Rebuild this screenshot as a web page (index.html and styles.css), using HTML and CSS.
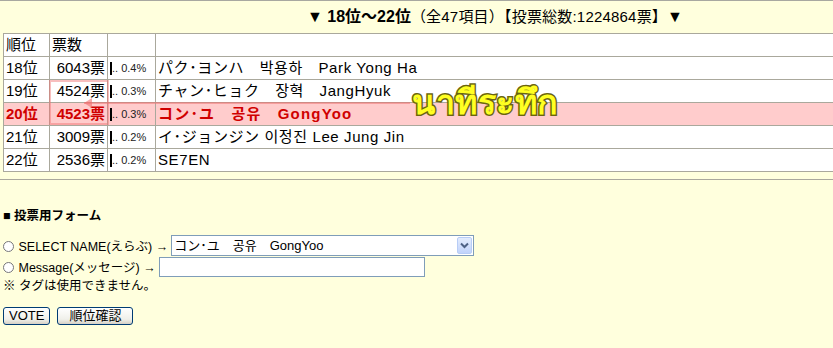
FILE: index.html
```html
<!DOCTYPE html>
<html lang="ja">
<head>
  <meta charset="UTF-8" />
  <meta name="viewport" content="width=device-width,initial-scale=1.0" />
  <title>ランキング 18位〜22位</title>
  <link rel="stylesheet" href="styles.css">
</head>
<body>
  <div class="head">
    <b>▼ 18位〜22位</b><span>（全47項目）【投票総数:1224864票】</span><b>▼</b>
  </div>

  <table class="rank">
    <colgroup>
      <col class="c1"><col class="c2"><col class="c3"><col>
    </colgroup>
    <tr>
      <td>順位</td><td class="lt">票数</td><td></td><td></td>
    </tr>
    <tr>
      <td>18位</td><td class="num">6043票</td>
      <td><i class="bar"></i><small>.. 0.4%</small></td>
      <td class="nm">パク･ヨンハ　박용하　Park Yong Ha</td>
    </tr>
    <tr>
      <td>19位</td><td class="num">4524票</td>
      <td><i class="bar"></i><small>.. 0.3%</small></td>
      <td class="nm">チャン･ヒョク　장혁　JangHyuk</td>
    </tr>
    <tr class="me">
      <td>20位</td><td class="num">4523票</td>
      <td><i class="bar"></i><small>.. 0.3%</small></td>
      <td class="nm">コン･ユ　공유　GongYoo</td>
    </tr>
    <tr>
      <td>21位</td><td class="num">3009票</td>
      <td><i class="bar"></i><small>.. 0.2%</small></td>
      <td class="nm">イ･ジョンジン 이정진 Lee Jung Jin</td>
    </tr>
    <tr>
      <td>22位</td><td class="num">2536票</td>
      <td><i class="bar"></i><small>.. 0.2%</small></td>
      <td class="nm">SE7EN</td>
    </tr>
  </table>

  <div class="rule"></div>

  <form class="vote" action="#" method="post">
    <div class="title">■ 投票用フォーム</div>
    <div class="line">
      <label><input type="radio" name="mode" value="select"> SELECT NAME(えらぶ) →</label>
      <span class="sel">
        <select name="name">
          <option>コン･ユ　공유　GongYoo</option>
          <option>SE7EN</option>
        </select>
        <span class="arrow">
          <svg width="9" height="7" viewBox="0 0 9 7"><path d="M1 1.5 L4.5 5 L8 1.5" fill="none" stroke="#4d6185" stroke-width="2"/></svg>
        </span>
      </span>
    </div>
    <div class="line">
      <label><input type="radio" name="mode" value="msg"> Message(メッセージ) →</label>
      <input type="text" name="msg" class="msg">
    </div>
    <div class="note-tag">※ タグは使用できません。</div>
    <div class="btns">
      <button type="submit">VOTE</button>
      <button type="button" class="wide">順位確認</button>
    </div>
  </form>

  <!-- 貼り付けた注釈 -->
  <div class="mark"></div>
  <div class="pointer"></div>
  <div class="thai">นาทีระทึก</div>
</body>
</html>
```

FILE: styles.css
```css
html {
  overflow: hidden;
}

body {
  margin: 0;
  position: relative;
  height: 347px;
  background-color: #ffffdd;
  border-top: 1px solid #a8a8a0;
  font-family: "Liberation Sans", "Noto Sans CJK JP", sans-serif;
  font-size: 14px;
  color: #000;
}

.head {
  height: 32px;
  line-height: 32px;
  padding-left: 307px;
  white-space: nowrap;
}

.head b {
  font-size: 16px;
}

.head span {
  font-size: 15px;
  letter-spacing: 0.2px;
}

.rank {
  border-collapse: collapse;
  margin-left: 3px;
  width: 840px;
  background-color: #fff;
}

.rank tr {
  height: 23px;
}

.rank td {
  border: 1px solid #aaa89c;
  height: 22px;
  padding: 0 2px;
  line-height: 18px;
  white-space: nowrap;
  font-size: 15px;
  box-sizing: border-box;
}

.rank .nm {
  letter-spacing: 0.6px;
}

.c1 {
  width: 46px;
}

.c2 {
  width: 58px;
}

.c3 {
  width: 48px;
}

.num {
  text-align: right;
}

.bar {
  display: inline-block;
  width: 2px;
  height: 13px;
  background-color: #000;
  vertical-align: middle;
}

.rank small {
  font-size: 11px;
  color: #222;
  vertical-align: middle;
}

.me td {
  background-color: #ffcccc;
  color: #d00000;
  font-weight: bold;
}

.me .nm {
  letter-spacing: 1.2px;
}

.me small {
  font-weight: normal;
}

.rule {
  margin-top: 7px;
  border-top: 1px solid #aaa89c;
}

.vote {
  padding: 25px 3px 0;
  font-size: 12.5px;
}

.title {
  font-weight: bold;
  height: 18px;
  margin-bottom: 12px;
}

.line {
  display: flex;
  align-items: center;
  height: 21px;
}

.line input[type="radio"] {
  width: 11px;
  height: 11px;
  margin: 0 1px 0 0;
  vertical-align: -1px;
}

.sel {
  position: relative;
  margin-left: 3px;
}

.sel select {
  appearance: none;
  width: 303px;
  height: 21px;
  border: 1px solid #7f9db9;
  background-color: #fff;
  padding: 0 2px;
  font-family: "Liberation Sans", "Noto Sans CJK JP", sans-serif;
  font-size: 13px;
  color: #000;
}

.arrow {
  position: absolute;
  right: 2px;
  top: 2px;
  width: 15px;
  height: 17px;
  border: 1px solid #b8cdf6;
  border-radius: 2px;
  background: linear-gradient(#e3ecfd, #c1d3fb);
  display: flex;
  align-items: center;
  justify-content: center;
  box-sizing: border-box;
}

.msg {
  margin-left: 3px;
  width: 266px;
  height: 20px;
  box-sizing: border-box;
  border: 1px solid #7f9db9;
}

.note-tag {
  height: 18px;
  line-height: 18px;
}

.btns {
  margin-top: 12px;
  display: flex;
  gap: 7px;
}

.btns button {
  height: 18px;
  padding: 0 5px;
  border: 1px solid #003c74;
  border-radius: 3px;
  background: linear-gradient(#ffffff, #f0f0ea 70%, #d6d0c5);
  font-family: "Liberation Sans", "Noto Sans CJK JP", sans-serif;
  font-size: 13px;
  line-height: 16px;
  color: #000;
}

.btns .wide {
  width: 76px;
}

.mark {
  position: absolute;
  left: 49px;
  top: 79px;
  width: 56px;
  height: 41px;
  border: 2px solid rgba(240, 110, 110, 0.45);
}

.pointer {
  position: absolute;
  left: 84px;
  top: 101px;
  width: 326px;
  height: 2px;
  background-color: rgba(240, 110, 110, 0.5);
}

.pointer::before {
  content: "";
  position: absolute;
  left: 0;
  top: -4px;
  border-right: 8px solid rgba(240, 110, 110, 0.6);
  border-top: 5px solid transparent;
  border-bottom: 5px solid transparent;
}

.thai {
  position: absolute;
  left: 412px;
  top: 74px;
  font-family: "Noto Sans", "DejaVu Sans", sans-serif;
  font-size: 34px;
  font-weight: bold;
  letter-spacing: 0.5px;
  color: #ffff22;
  -webkit-text-stroke: 3px #6a6410;
  paint-order: stroke fill;
  white-space: nowrap;
}
```
